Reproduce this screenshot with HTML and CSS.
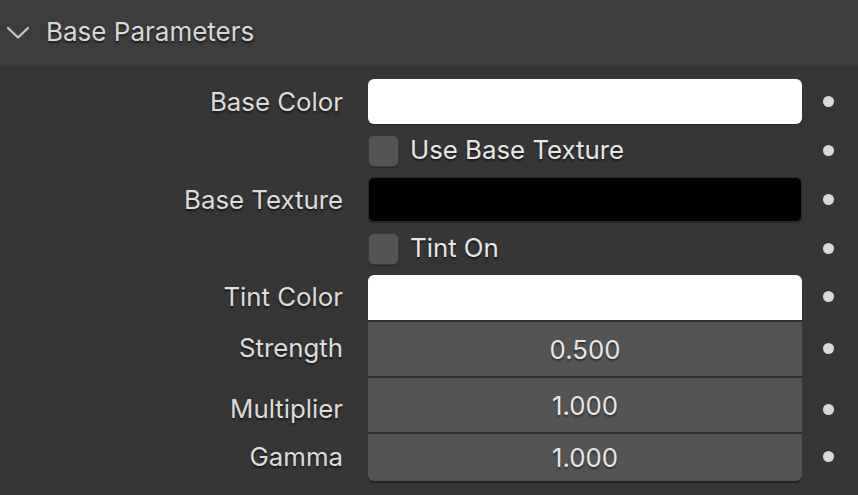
FILE: index.html
```html
<!DOCTYPE html>
<html>
<head>
<meta charset="utf-8">
<link rel="stylesheet" href="styles.css">
</head>
<body>
<div class="panel">
  <div class="panel-header">
    <svg class="chevron" width="24" height="14" viewBox="0 0 24 14"><path d="M2 2 L12 11.5 L22 2" fill="none" stroke="#c8c8c8" stroke-width="2.2" stroke-linecap="round" stroke-linejoin="round"/></svg>
    <span class="panel-title">Base Parameters</span>
  </div>
  <div class="panel-body">
    <div class="label">Base Color</div>
    <div class="cell"><div class="field color-white"></div></div>
    <div class="dot-cell"><span class="dot"></span></div>

    <div class="label"></div>
    <div class="cell"><div class="check"><span class="box"></span><span class="check-text">Use Base Texture</span></div></div>
    <div class="dot-cell"><span class="dot"></span></div>

    <div class="label">Base Texture</div>
    <div class="cell"><div class="field color-black"></div></div>
    <div class="dot-cell"><span class="dot"></span></div>

    <div class="label"></div>
    <div class="cell"><div class="check"><span class="box"></span><span class="check-text">Tint On</span></div></div>
    <div class="dot-cell"><span class="dot"></span></div>

    <div class="label">Tint Color</div>
    <div class="cell cell-end"><div class="field color-white group-top"></div></div>
    <div class="dot-cell"><span class="dot"></span></div>

    <div class="label">Strength</div>
    <div class="cell cell-fill"><div class="num">0.500</div></div>
    <div class="dot-cell"><span class="dot"></span></div>

    <div class="label label-low">Multiplier</div>
    <div class="cell cell-fill"><div class="num">1.000</div></div>
    <div class="dot-cell dot-low"><span class="dot"></span></div>

    <div class="label">Gamma</div>
    <div class="cell cell-fill"><div class="num num-last">1.000</div></div>
    <div class="dot-cell"><span class="dot"></span></div>
  </div>
</div>
</body>
</html>
```

FILE: styles.css
```css
html, body {
  margin: 0;
  padding: 0;
  background: #363636;
  width: 858px;
  height: 495px;
  overflow: hidden;
  font-family: Inter, "Noto Sans", sans-serif;
}

.panel {
  width: 858px;
}

.panel-header {
  height: 65px;
  background: #3d3d3d;
  display: flex;
  align-items: center;
  box-sizing: border-box;
  padding-left: 6px;
}

.chevron {
  display: block;
  margin-top: 1px;
}

.panel-title {
  margin-left: 16px;
  font-size: 26px;
  color: #d8d8d8;
  text-shadow: 0 2px 2px rgba(0,0,0,0.55);
  line-height: 1;
  margin-top: -2px;
}

.panel-body {
  display: grid;
  grid-template-columns: 343px 25px 434px 56px;
  grid-template-rows: 49px 49px 49px 49px 47px 56px 56px 49px;
  padding-top: 12px;
}

.label {
  grid-column: 1;
  display: flex;
  align-items: center;
  justify-content: flex-end;
  font-size: 25.8px;
  color: #dcdcdc;
  text-shadow: 0 2px 2px rgba(0,0,0,0.55);
  white-space: nowrap;
  padding-bottom: 1px;
}

.label-low {
  padding-top: 10px;
}

.cell {
  grid-column: 3;
  display: flex;
  align-items: center;
}

.cell-end {
  align-items: flex-end;
}

.cell-fill {
  align-items: stretch;
}

.dot-cell {
  grid-column: 4;
  display: flex;
  align-items: center;
  padding-left: 21px;
}

.dot-low {
  padding-top: 10px;
}

.dot {
  width: 11px;
  height: 11px;
  border-radius: 50%;
  background: #d9d9d9;
  display: block;
}

.field {
  width: 100%;
  height: 45px;
  border-radius: 6px;
  box-sizing: border-box;
  box-shadow: 0 1px 1px rgba(0,0,0,0.35);
}

.color-white {
  background: #ffffff;
}

.color-black {
  background: #000000;
  border: 1px solid #2a2a2a;
}

.group-top {
  border-radius: 6px 6px 0 0;
}

.num {
  width: 100%;
  background: #545454;
  border-top: 2px solid #2e2e2e;
  display: flex;
  align-items: center;
  justify-content: center;
  font-size: 25.8px;
  color: #e6e6e6;
  text-shadow: 0 2px 2px rgba(0,0,0,0.45);
  box-sizing: border-box;
}

.num-last {
  border-radius: 0 0 6px 6px;
  box-shadow: 0 2px 1px rgba(0,0,0,0.35);
}

.check {
  display: flex;
  align-items: center;
}

.box {
  width: 31px;
  height: 32px;
  box-sizing: border-box;
  background: #545454;
  border: 1px solid #3a3a3a;
  border-radius: 6px;
  box-shadow: 0 1px 1px rgba(0,0,0,0.35);
}

.check-text {
  margin-left: 11px;
  font-size: 25.8px;
  color: #e6e6e6;
  text-shadow: 0 2px 2px rgba(0,0,0,0.55);
  white-space: nowrap;
  padding-bottom: 2px;
}
```
